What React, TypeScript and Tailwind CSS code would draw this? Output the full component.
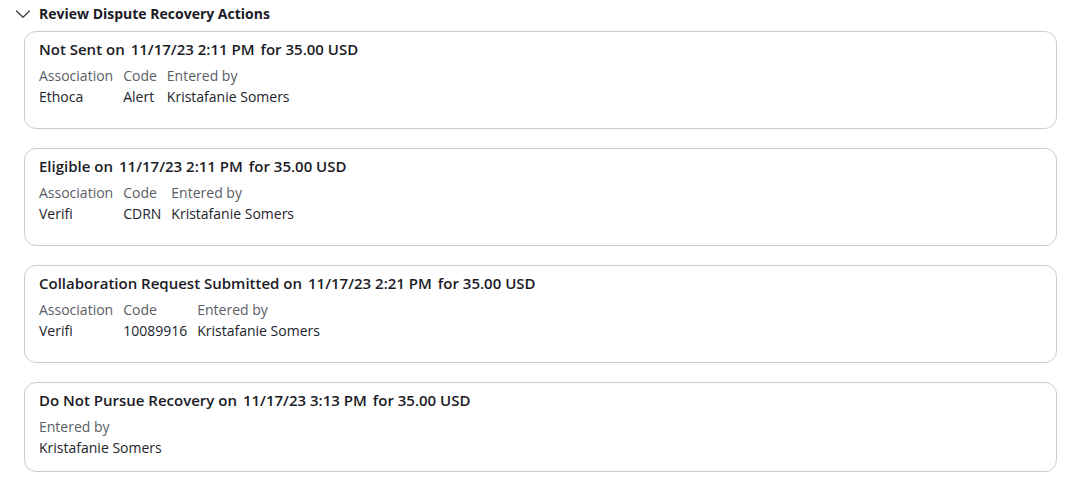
type Field = { label: string; value: string }

type Action = {
  status: string
  date: string
  amount: string
  fields: Field[]
}

const actions: Action[] = [
  {
    status: 'Not Sent',
    date: '11/17/23 2:11 PM',
    amount: '35.00 USD',
    fields: [
      { label: 'Association', value: 'Ethoca' },
      { label: 'Code', value: 'Alert' },
      { label: 'Entered by', value: 'Kristafanie Somers' },
    ],
  },
  {
    status: 'Eligible',
    date: '11/17/23 2:11 PM',
    amount: '35.00 USD',
    fields: [
      { label: 'Association', value: 'Verifi' },
      { label: 'Code', value: 'CDRN' },
      { label: 'Entered by', value: 'Kristafanie Somers' },
    ],
  },
  {
    status: 'Collaboration Request Submitted',
    date: '11/17/23 2:21 PM',
    amount: '35.00 USD',
    fields: [
      { label: 'Association', value: 'Verifi' },
      { label: 'Code', value: '10089916' },
      { label: 'Entered by', value: 'Kristafanie Somers' },
    ],
  },
  {
    status: 'Do Not Pursue Recovery',
    date: '11/17/23 3:13 PM',
    amount: '35.00 USD',
    fields: [{ label: 'Entered by', value: 'Kristafanie Somers' }],
  },
]

function Chevron() {
  return (
    <svg viewBox="0 0 16 10" fill="none" stroke="currentColor" strokeWidth="1.3" strokeLinecap="round" strokeLinejoin="round" className="h-[10px] w-[16px]">
      <path d="M1.5 2 8 8.2 14.5 2" />
    </svg>
  )
}

function ActionCard({ action }: { action: Action }) {
  const single = action.fields.length === 1
  return (
    <div
      className={`rounded-[12px] border border-[#c9ced4] bg-white px-[14px] pt-[6px] ${
        single ? 'pb-[13px]' : 'pb-[21px]'
      }`}
    >
      <div className="flex gap-[6px] text-[15px] leading-[22px] font-semibold text-[#1b1b26]">
        <span>{action.status} on</span>
        <span>{action.date}</span>
        <span>for {action.amount}</span>
      </div>
      <div className="mt-[5px] flex gap-x-[10px] text-[14px] leading-[21px]">
        {action.fields.map((f) => (
          <div key={f.label} className="flex flex-col">
            <span className="text-[#5a5d66]">{f.label}</span>
            <span className="text-[#22232b]">{f.value}</span>
          </div>
        ))}
      </div>
    </div>
  )
}

export default function App() {
  return (
    <div className="min-h-screen bg-white font-['Open_Sans',sans-serif]">
      <div className="pl-[24px] pr-[15px] pt-[4px]">
        <button className="-ml-[9px] flex items-center gap-[8px] text-[14px] leading-[20px] font-bold text-[#1b1b26]">
          <span className="text-[#3c3f48]">
            <Chevron />
          </span>
          <span>Review Dispute Recovery Actions</span>
        </button>
        <div className="mt-[7px] flex flex-col gap-[19px]">
          {actions.map((a) => (
            <ActionCard key={a.status} action={a} />
          ))}
        </div>
      </div>
    </div>
  )
}
